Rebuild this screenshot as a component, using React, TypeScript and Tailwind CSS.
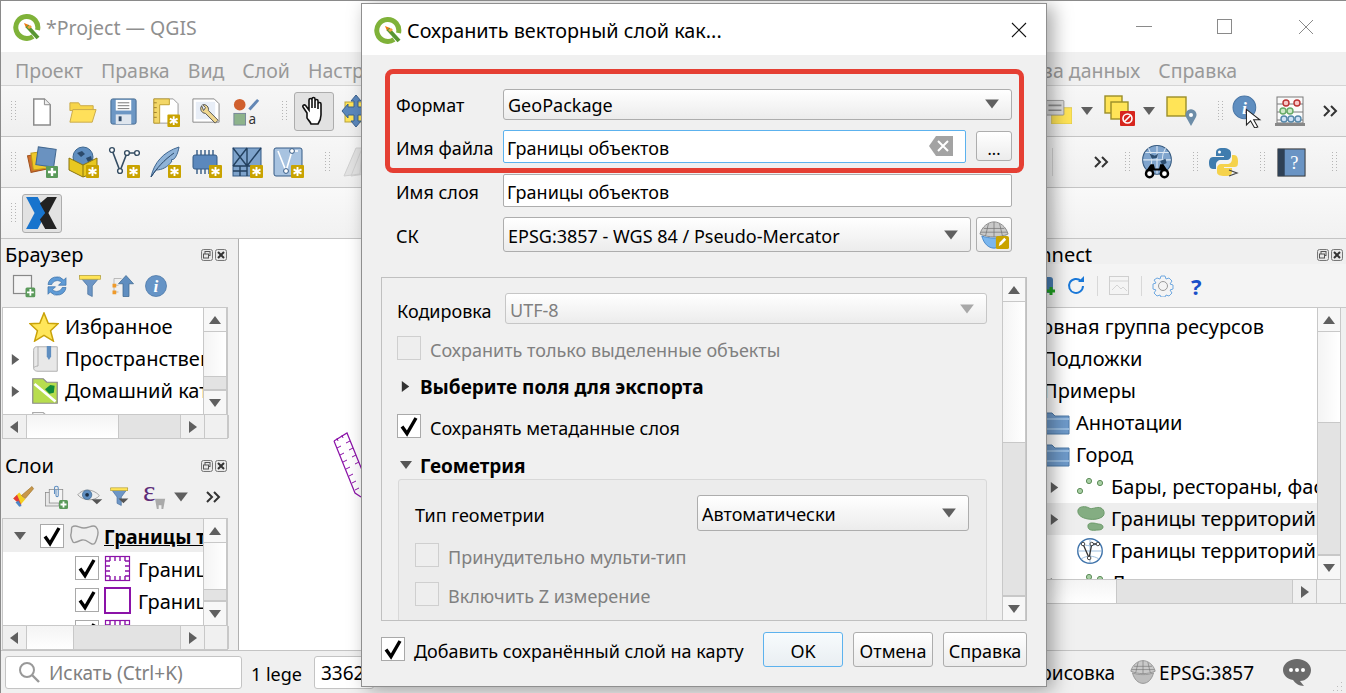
import type { ReactNode } from 'react';

const font = { fontFamily: '"Noto Sans", "Open Sans", sans-serif' };

function I({ s = 30, children }: { s?: number; children: ReactNode }) {
  return (
    <svg width={s} height={s} viewBox="0 0 32 32" className="shrink-0">
      {children}
    </svg>
  );
}

function Badge() {
  return (
    <g>
      <rect x="19" y="19" width="13" height="13" rx="1" fill="#c9a300" />
      <path d="M25.500 21v9M21.500 23.300l8 4.400M29.500 23.300l-8 4.400" stroke="#fff" strokeWidth="1.900" />
    </g>
  );
}

function QgisLogo({ s = 28 }: { s?: number }) {
  return (
    <svg width={s} height={s} viewBox="0 0 28 28" className="shrink-0">
      <path d="M20 23.500A11 11 0 1 1 24.500 17" fill="none" stroke="#7fb239" strokeWidth="5" />
      <path d="M11 10l5 2-3 3z" fill="#ee7913" />
      <path d="M14 13l11 12" stroke="#589632" strokeWidth="4" />
      <path d="M14 14l3-2 2 2-3 2z" fill="#f0a13a" />
    </svg>
  );
}

function Tri({ dir, c = '#5f5f5f', s = 14 }: { dir: 'u' | 'd' | 'l' | 'r'; c?: string; s?: number }) {
  const pts = { u: '1,11 13,11 7,3', d: '1,3 13,3 7,11', l: '10,1 10,13 2,7', r: '3,1 3,13 11,7' }[dir];
  return (
    <svg width={s} height={s} viewBox="0 0 14 14" className="shrink-0">
      <polygon points={pts} fill={c} />
    </svg>
  );
}

function Handle() {
  const dots = [];
  for (let i = 0; i < 7; i++) {
    dots.push(<rect key={`a${i}`} x="1" y={1 + i * 3} width="1" height="1" fill="#b5b5b5" />);
    dots.push(<rect key={`b${i}`} x="5" y={1 + i * 3} width="1" height="1" fill="#b5b5b5" />);
  }
  return (
    <svg width="7" height="22" className="shrink-0">
      {dots}
    </svg>
  );
}

function Chevrons() {
  return (
    <svg width="16" height="14" viewBox="0 0 16 14" className="shrink-0">
      <path d="M2 2l5 5-5 5M9 2l5 5-5 5" fill="none" stroke="#333" strokeWidth="2" />
    </svg>
  );
}

function Slot({ children }: { children: ReactNode }) {
  return <div className="flex w-[41px] shrink-0 items-center justify-center">{children}</div>;
}

function Cell({ children }: { children: ReactNode }) {
  return <div className="flex w-[33px] shrink-0 items-center justify-start">{children}</div>;
}

function Check() {
  return (
    <svg width="22" height="22" viewBox="0 0 22 22">
      <path d="M4 11.500l5 7L18 3" fill="none" stroke="#000" strokeWidth="3.400" />
    </svg>
  );
}

function CheckBox({ on, off }: { on?: boolean; off?: boolean }) {
  return (
    <div className={`flex h-6 w-6 shrink-0 items-center justify-center border ${off ? 'border-[#cfcfcf] bg-[#eeeeee]' : 'border-[#a9a9a9] bg-white'}`}>
      {on && <Check />}
    </div>
  );
}

function VScroll({ thumbTop, thumb }: { thumbTop: number; thumb: number }) {
  return (
    <div className="flex w-[24px] shrink-0 flex-col border-x border-[#c8c8c8] bg-[#f7f7f7]">
      <div className="flex h-[24px] shrink-0 items-center justify-center border-b border-[#c8c8c8]">
        <Tri dir="u" />
      </div>
      <div className="bg-gradient-to-r from-[#f4f4f4] to-white" style={{ height: thumbTop }} />
      <div className="border-y border-[#c8c8c8] bg-[#e3e3e3]" style={{ height: thumb }} />
      <div className="flex-1" />
      <div className="flex h-[24px] shrink-0 items-center justify-center border-t border-[#c8c8c8]">
        <Tri dir="d" />
      </div>
    </div>
  );
}

function HScroll({ before, thumb }: { before: number; thumb: number }) {
  return (
    <div className="flex h-[24px] shrink-0 border-t border-[#c8c8c8]">
      <div className="flex w-[24px] shrink-0 items-center justify-center border-r border-[#c8c8c8]">
        <Tri dir="l" />
      </div>
      <div className="shrink-0 bg-gradient-to-b from-[#f4f4f4] to-white" style={{ width: before }} />
      <div className="shrink-0 border-x border-[#c8c8c8] bg-[#e3e3e3]" style={{ width: thumb }} />
      <div className="flex w-[24px] shrink-0 items-center justify-center border-r border-[#c8c8c8]">
        <Tri dir="r" />
      </div>
      <div className="w-[24px] shrink-0 border-r border-[#c8c8c8]" />
    </div>
  );
}

function DockButtons() {
  return (
    <div className="flex shrink-0 gap-[2px]">
      <svg width="12" height="12" viewBox="0 0 12 12">
        <rect x="0.500" y="0.500" width="11" height="11" rx="2" fill="#e8e8e8" stroke="#777" />
        <rect x="4" y="2.500" width="5" height="4" fill="none" stroke="#555" />
        <rect x="2.500" y="5" width="5" height="4" fill="#e8e8e8" stroke="#555" />
      </svg>
      <svg width="12" height="12" viewBox="0 0 12 12">
        <rect x="0.500" y="0.500" width="11" height="11" rx="2" fill="#e8e8e8" stroke="#777" />
        <path d="M3 3l6 6M9 3l-6 6" stroke="#333" strokeWidth="2" />
      </svg>
    </div>
  );
}

function Combo({ text, w, h, dim }: { text: string; w: string; h: string; dim?: boolean }) {
  return (
    <div className={`flex ${w} ${h} shrink-0 items-center justify-between rounded-[3px] border bg-gradient-to-b from-white to-[#ececec] pl-[4px] pr-[11px] ${dim ? 'border-[#c6c6c6] text-[#808080]' : 'border-[#adadad] text-black'}`}>
      <span className="whitespace-nowrap pt-[2px]">{text}</span>
      <Tri dir="d" s={16} c={dim ? '#a8a8a8' : '#5f5f5f'} />
    </div>
  );
}

function Btn({ children, w, primary }: { children: ReactNode; w: string; primary?: boolean }) {
  return (
    <div className={`flex ${w} h-[35px] shrink-0 items-center justify-center rounded-[3px] border bg-gradient-to-b pt-[3px] ${primary ? 'border-[#5cb2ee] from-[#f7fbfd] to-[#e9eef2]' : 'border-[#adadad] from-white to-[#ececec]'}`}>
      {children}
    </div>
  );
}

function Page() {
  return (
    <I s={31}>
      <path d="M8 3h11l6 6v21H8z" fill="#fff" stroke="#8a8a8a" strokeWidth="1.500" />
      <path d="M19 3v6h6" fill="#eee" stroke="#8a8a8a" />
    </I>
  );
}

function Folder() {
  return (
    <I s={31}>
      <path d="M3 7h9l2 3h13v5H3z" fill="#f7d54a" stroke="#c9a94a" />
      <path d="M3 27l3-13h24l-4 13z" fill="#ffe05a" stroke="#c9a94a" />
    </I>
  );
}

function Save() {
  return (
    <I s={31}>
      <rect x="3" y="3" width="26" height="26" rx="2" fill="#6d97c4" stroke="#456a92" />
      <rect x="8" y="4" width="16" height="11" fill="#fff" />
      <path d="M10 7h12M10 10h12M10 13h12" stroke="#777" />
      <rect x="8" y="19" width="16" height="10" fill="#dfe6ee" />
      <rect x="11" y="21" width="3" height="5" fill="#2f4a68" />
    </I>
  );
}

function ProjectProps() {
  return (
    <I s={31}>
      <path d="M5 3h20l5 5v20H5z" fill="#fff" stroke="#999" />
      <path d="M5 3h16v6H11v19H5z" fill="#f3d768" stroke="#c0a030" />
      <path d="M5 7h3M5 12h3M5 17h3M5 22h3" stroke="#a0802a" />
      <Badge />
    </I>
  );
}

function WrenchPage() {
  return (
    <I s={31}>
      <path d="M3 3h22l5 5v19H3z" fill="#fff" stroke="#888" />
      <rect x="6" y="6" width="20" height="18" fill="#e8eef7" />
      <path d="M12 10a5 5 0 0 0 4 8l10 10 3-3-10-10a5 5 0 0 0-6-6l3 3-2 3z" fill="#f0d890" stroke="#555" />
    </I>
  );
}

function StyleMgr() {
  return (
    <I s={31}>
      <circle cx="9" cy="9" r="6" fill="#d0602e" />
      <path d="M19 14l9-10" stroke="#6387b5" strokeWidth="3" />
      <rect x="3" y="18" width="12" height="12" fill="#8db38b" stroke="#789" />
      <text x="18" y="29" fontSize="14" fill="#333" style={font}>a</text>
    </I>
  );
}

function Hand() {
  return (
    <I s={32}>
      <path d="M9 18L5 12c-1-2 2-3 3-1l3 4V5c0-2 3-2 3 0v8-9c0-2 3-2 3 0v9-7c0-2 3-2 3 0v8-5c0-2 3-2 3 0v11c0 4-1 6-3 9H13c-1-3-3-4-4-6z" fill="#fff" stroke="#111" strokeWidth="1.600" />
    </I>
  );
}

function MoveIcon() {
  return (
    <I s={32}>
      <rect x="5" y="7" width="22" height="20" fill="#ffe457" stroke="#b9a43c" />
      <path d="M16 0l5 6h-3v6h6V9l6 7-6 7v-3h-6v6h3l-5 6-5-6h3v-6H8v3l-6-7 6-7v3h6V6h-3z" fill="#5b88bd" stroke="#3d628e" />
    </I>
  );
}

function AddLayer() {
  return (
    <I s={32}>
      <rect x="3" y="8" width="17" height="17" transform="rotate(-12 11 16)" fill="#d0702e" stroke="#a0521e" />
      <rect x="6" y="6" width="17" height="17" transform="rotate(-8 14 14)" fill="#f0c828" stroke="#c09a18" />
      <rect x="11" y="2" width="18" height="18" transform="rotate(8 20 11)" fill="#6a92c0" stroke="#43688f" />
      <rect x="20" y="20" width="12" height="12" rx="1" fill="#5b9a5b" />
      <path d="M26 22v8M22 26h8" stroke="#fff" strokeWidth="2.400" />
    </I>
  );
}

function GlobeBox() {
  return (
    <I s={32}>
      <circle cx="16" cy="11" r="10" fill="#5f8ec0" stroke="#3e6890" />
      <path d="M10 7l5-2 3 3-4 3zM19 12l5-2 1 4-4 2z" fill="#2b4a6b" />
      <path d="M2 12l14 7 14-7v14l-14 5-14-7z" fill="#e8c820" stroke="#8a7510" />
      <path d="M16 19v12" stroke="#8a7510" />
      <Badge />
    </I>
  );
}

function VectorNew() {
  return (
    <I s={32}>
      <path d="M4 4l8 21L19 7h10" fill="none" stroke="#354d63" strokeWidth="1.600" />
      <circle cx="4" cy="4" r="2.400" fill="#fff" stroke="#354d63" strokeWidth="1.400" />
      <circle cx="12" cy="25" r="2.400" fill="#fff" stroke="#354d63" strokeWidth="1.400" />
      <circle cx="19" cy="7" r="2.400" fill="#fff" stroke="#354d63" strokeWidth="1.400" />
      <circle cx="29" cy="7" r="2.400" fill="#fff" stroke="#354d63" strokeWidth="1.400" />
      <Badge />
    </I>
  );
}

function Feather() {
  return (
    <I s={32}>
      <path d="M2 31C5 17 14 6 30 1c-1 6-3 10-5 12l-3 1 1 1c-4 6-10 9-16 9z" fill="#8fb3d8" stroke="#3f6690" />
      <path d="M2 31C8 22 15 14 25 7" stroke="#2b4a6b" fill="none" />
      <Badge />
    </I>
  );
}

function Chip() {
  return (
    <I s={32}>
      <rect x="3" y="9" width="24" height="14" rx="2" fill="#5b88bd" stroke="#345a85" />
      <path d="M7 4v5M11 4v5M15 4v5M19 4v5M23 4v5M7 23v5M11 23v5M15 23v5M19 23v5" stroke="#345a85" strokeWidth="1.400" />
      <Badge />
    </I>
  );
}

function Mesh() {
  return (
    <I s={32}>
      <rect x="2" y="2" width="28" height="28" fill="#7ea3cb" stroke="#345a85" />
      <path d="M2 20h28M16 2v28M2 2l14 18M16 2L2 20M30 2L16 20M2 25h14M9 20v10" stroke="#23405f" strokeWidth="1.400" fill="none" />
      <Badge />
    </I>
  );
}

function NodeBox() {
  return (
    <I s={32}>
      <rect x="2" y="2" width="28" height="28" rx="2" fill="#a8c3e0" stroke="#345a85" />
      <path d="M6 5l8 20 6-20h6" fill="none" stroke="#fff" strokeWidth="1.600" />
      <circle cx="14" cy="25" r="2.400" fill="#fff" stroke="#345a85" />
      <circle cx="20" cy="5" r="2.400" fill="#fff" stroke="#345a85" />
      <Badge />
    </I>
  );
}

function GhostStack() {
  return (
    <I s={32}>
      <path d="M3 30L15 2l6 0-2 26zM10 30L22 0l6 2-4 26z" fill="#e2e2e2" stroke="#d0d0d0" />
    </I>
  );
}

function XLogo() {
  return (
    <I s={34}>
      <path d="M1 1h11l8 15-8 15H1l8-15z" fill="#1874cd" />
      <path d="M21 1h9l-8 15 8 15H19l-5-9 5-6-5-9z" fill="#222" />
    </I>
  );
}

function SelectYellow() {
  return (
    <I s={26}>
      <rect x="7" y="12" width="25" height="20" fill="#ffe457" stroke="#d6c14a" />
      <rect x="0" y="3" width="22" height="18" rx="1" fill="#d8d8d8" stroke="#8d8d8d" />
      <path d="M3 9h16M3 15h16" stroke="#8d8d8d" strokeWidth="2" />
    </I>
  );
}

function Deselect() {
  return (
    <I s={32}>
      <rect x="1" y="1" width="17" height="17" fill="#ffe457" stroke="#9b8e28" strokeWidth="1.400" />
      <rect x="7" y="7" width="17" height="17" fill="#ffe457" stroke="#9b8e28" strokeWidth="1.400" />
      <rect x="16" y="16" width="15" height="15" rx="1" fill="#d7261e" />
      <circle cx="23.500" cy="23.500" r="4.500" fill="none" stroke="#fff" strokeWidth="1.600" />
      <path d="M20 27l7-7" stroke="#fff" strokeWidth="1.600" />
    </I>
  );
}

function SelectPin() {
  return (
    <I s={32}>
      <rect x="1" y="2" width="19" height="19" fill="#ffe457" stroke="#9b8e28" strokeWidth="1.400" />
      <path d="M25 31l-5-9a5.500 5.500 0 1 1 10 0z" fill="#6d8da8" />
      <circle cx="25" cy="20" r="2" fill="#fff" />
    </I>
  );
}

function InfoCursor() {
  return (
    <I s={33}>
      <circle cx="12" cy="12" r="11" fill="#5f8ec0" stroke="#4a76a6" />
      <text x="12" y="18" fontSize="17" fontWeight="700" fontStyle="italic" fill="#fff" textAnchor="middle" style={{ fontFamily: '"Liberation Serif", serif' }}>i</text>
      <path d="M14 14v15l4-4 4 7 3-1-4-7h6z" fill="#fff" stroke="#222" />
    </I>
  );
}

function Abacus() {
  return (
    <I s={32}>
      <rect x="3" y="2" width="26" height="26" fill="#fafafa" stroke="#7a7a7a" />
      <path d="M3 9h26M3 17h26M3 25h26" stroke="#7a7a7a" />
      <circle cx="12" cy="8" r="3" fill="#f7c8c8" stroke="#b33" strokeWidth="1.400" />
      <circle cx="23" cy="8" r="3" fill="#f7c8c8" stroke="#b33" strokeWidth="1.400" />
      <circle cx="9" cy="16" r="3" fill="#cfe8c8" stroke="#6a6" strokeWidth="1.400" />
      <circle cx="16" cy="16" r="3" fill="#cfe8c8" stroke="#6a6" strokeWidth="1.400" />
      <circle cx="10" cy="24" r="3" fill="#cfe0f5" stroke="#58a" strokeWidth="1.400" />
      <circle cx="17" cy="24" r="3" fill="#cfe0f5" stroke="#58a" strokeWidth="1.400" />
      <circle cx="24" cy="24" r="3" fill="#cfe0f5" stroke="#58a" strokeWidth="1.400" />
      <rect x="1" y="28" width="30" height="3" fill="#888" />
    </I>
  );
}

function MetaSearch() {
  return (
    <I s={34}>
      <circle cx="16" cy="14" r="13.500" fill="#7fa4cd" stroke="#35597f" />
      <path d="M5 7h22M3 14h26M16 1v26M8 3c4 7 4 15 0 21M24 3c-4 7-4 15 0 21" stroke="#dbe7f3" fill="none" />
      <path d="M9 8l5 2 3-2-1 4-5 1zM19 15l5-2 1 4-4 2z" fill="#2e4f72" />
      <circle cx="9" cy="27" r="4.500" fill="#000" />
      <circle cx="23" cy="27" r="4.500" fill="#000" />
      <circle cx="9" cy="27" r="2.200" fill="#fff" />
      <circle cx="23" cy="27" r="2.200" fill="#fff" />
      <path d="M6 24l4-6h3l1 4h4l1-4h3l4 6z" fill="#000" />
    </I>
  );
}

function PythonIcon() {
  return (
    <I s={32}>
      <path d="M15 2c-6 0-7 2-7 5v3h8v1H5c-3 0-4 3-4 6s1 6 4 6h3v-4c0-3 2-5 5-5h6c2 0 4-2 4-4V7c0-3-3-5-8-5z" fill="#3f7cae" />
      <circle cx="11.500" cy="6" r="1.500" fill="#fff" />
      <path d="M17 30c6 0 7-2 7-5v-3h-8v-1h11c3 0 3-3 3-6s-1-6-4-6h-2v4c0 3-2 5-5 5h-6c-2 0-4 2-4 4v4c0 3 3 4 8 4z" fill="#f5d24b" />
      <path d="M21 24l8 3-8 3" fill="none" stroke="#444" strokeWidth="1.200" />
    </I>
  );
}

function HelpBook() {
  return (
    <I s={31}>
      <rect x="2" y="2" width="28" height="28" fill="#6a94c4" stroke="#333" />
      <rect x="2" y="2" width="7" height="28" fill="#2f4156" />
      <text x="19" y="23" fontSize="19" fill="#fff" textAnchor="middle" style={{ fontFamily: '"Liberation Serif", serif' }}>?</text>
    </I>
  );
}

function NewGpkg() {
  return (
    <I s={24}>
      <rect x="2" y="2" width="24" height="24" fill="#f4f4f4" stroke="#888" strokeWidth="1.600" />
      <rect x="18" y="18" width="13" height="13" rx="2" fill="#5b9a5b" />
      <path d="M24.500 20v9M20 24.500h9" stroke="#fff" strokeWidth="2.400" />
    </I>
  );
}

function Refresh() {
  return (
    <I s={24}>
      <path d="M4 14a12 12 0 0 1 21-6l3-3v10H18l4-4a8 8 0 0 0-13 3z" fill="#5f9bd6" stroke="#3f73aa" />
      <path d="M28 18a12 12 0 0 1-21 6l-3 3V17h10l-4 4a8 8 0 0 0 13-3z" fill="#5f9bd6" stroke="#3f73aa" />
    </I>
  );
}

function Funnel({ s = 24 }: { s?: number }) {
  return (
    <I s={s}>
      <path d="M2 3h28l-11 13v14l-6-3V16z" fill="#6d96c6" stroke="#4a719e" />
      <rect x="2" y="2" width="28" height="5" fill="#ffe457" stroke="#b9a43c" />
    </I>
  );
}

function CollapseTree() {
  return (
    <I s={24}>
      <path d="M4 6h10M4 6v20M4 15h6M4 24h6" stroke="#aaa" fill="none" />
      <rect x="2" y="13" width="5" height="5" fill="#ef9a2a" />
      <rect x="2" y="22" width="5" height="5" fill="#ef9a2a" />
      <path d="M20 2l10 11h-6v17h-8V13h-6z" fill="#5f8ec0" stroke="#3e6890" />
    </I>
  );
}

function InfoBall() {
  return (
    <I s={24}>
      <circle cx="16" cy="16" r="14" fill="#6694c6" stroke="#4a76a6" />
      <text x="16" y="24" fontSize="23" fontWeight="700" fontStyle="italic" fill="#fff" textAnchor="middle" style={{ fontFamily: '"Liberation Serif", serif' }}>i</text>
    </I>
  );
}

function Star() {
  return (
    <I s={30}>
      <polygon points="16,1 20.500,12 31,12.500 23,20 26,31 16,25 6,31 9,20 1,12.500 11.500,12" fill="#ffe65a" stroke="#c9a20a" strokeWidth="1.600" />
    </I>
  );
}

function Scroll() {
  return (
    <I s={28}>
      <path d="M6 2h24v28H8c-4 0-5-2-5-4V6c0-2 1-4 3-4z" fill="#e8e8e8" stroke="#a8a8a8" />
      <path d="M8 2v22c-2 0-4 1-5 2" fill="none" stroke="#a8a8a8" />
      <path d="M18 1h5v12l-2.500 4-2.500-4z" fill="#5f8ec0" />
    </I>
  );
}

function HomeMap() {
  return (
    <I s={28}>
      <path d="M2 2h12l4 4h12v24H2z" fill="#b7dd4e" stroke="#8a8a8a" strokeWidth="1.400" />
      <path d="M4 8l24 20" stroke="#fff" strokeWidth="3" />
      <path d="M16 14l6-5 5 1-1 8-5 1z" fill="#108a3a" />
    </I>
  );
}

function PlainFolder() {
  return (
    <I s={28}>
      <path d="M2 4h12l4 4h12v22H2z" fill="#f4f4f4" stroke="#aaa" strokeWidth="1.400" />
    </I>
  );
}

function Brush() {
  return (
    <I s={24}>
      <path d="M3 18l8-8 8 9-6 7z" fill="#f4d020" />
      <path d="M3 18l5-5 6 14-1 0z" fill="#e23a3a" />
      <path d="M6 23l4-2 4 7-3 1z" fill="#4b86c6" />
      <path d="M14 14L28 2l2 3-11 13z" fill="#c8974a" stroke="#a67a30" />
    </I>
  );
}

function AddGroup() {
  return (
    <I s={24}>
      <rect x="2" y="10" width="18" height="18" fill="#e8e8e8" stroke="#888" />
      <rect x="7" y="6" width="18" height="18" fill="#f4f4f4" stroke="#888" />
      <path d="M14 12V4c0-3 5-3 5 0v10c0 2-3 2-3 0V6" fill="none" stroke="#5f8ec0" strokeWidth="1.400" />
      <rect x="20" y="20" width="12" height="12" rx="2" fill="#5b9a5b" />
      <path d="M26 22v8M22 26h8" stroke="#fff" strokeWidth="2.400" />
    </I>
  );
}

function Eye() {
  return (
    <svg width="26" height="24" viewBox="0 0 36 28" className="shrink-0">
      <path d="M1 11C8 2 22 2 31 12c-6 8-22 8-30-1z" fill="#eee" stroke="#888" />
      <circle cx="14" cy="11" r="6.500" fill="#5f8ec0" stroke="#3e6890" />
      <circle cx="14" cy="11" r="2.600" fill="#1c2f45" />
      <polygon points="20,17 35,17 27.500,24" fill="#555" />
    </svg>
  );
}

function FilterDrop() {
  return (
    <svg width="24" height="24" viewBox="0 0 34 28" className="shrink-0">
      <path d="M1 2h24l-9 12v12l-6-3V14z" fill="#6d96c6" stroke="#4a719e" />
      <rect x="1" y="1" width="24" height="4" fill="#ffe457" stroke="#b9a43c" />
      <polygon points="12,16 26,16 19,23" fill="#555" />
    </svg>
  );
}

function ExprIcon() {
  return (
    <svg width="24" height="26" viewBox="0 0 26 28" className="shrink-0">
      <text x="0" y="18" fontSize="32" fill="#5e2d78" style={{ fontFamily: '"Liberation Serif", serif' }}>&#949;</text>
      <path d="M13 16h11l-2 11h-2v-4h-3v4h-2z" fill="#aaa" />
    </svg>
  );
}

function SymDash() {
  return (
    <svg width="27" height="27" viewBox="0 0 27 27" className="shrink-0">
      <rect x="1.500" y="1.500" width="24" height="24" fill="#fff" stroke="#8b12a8" strokeWidth="1.200" />
      <path d="M6 2v4M11 2v4M16 2v4M21 2v4M6 21v4M11 21v4M16 21v4M21 21v4M2 6h4M2 11h4M2 16h4M2 21h4M21 6h4M21 11h4M21 16h4M21 21h4" stroke="#8b12a8" strokeWidth="1.400" />
    </svg>
  );
}

function Blob() {
  return (
    <svg width="30" height="24" viewBox="0 0 30 24" className="shrink-0">
      <path d="M3 3c4-3 7 1 12 1s9-4 12-1 2 8 1 11-2 7-5 6-6-5-10-4-8 4-9 2-3-5-2-8 0-6 1-7z" fill="#eeeeee" stroke="#9a9a9a" strokeWidth="1.400" />
    </svg>
  );
}

function GreenBlobs() {
  return (
    <svg width="30" height="28" viewBox="0 0 30 28" className="shrink-0">
      <path d="M2 5c1-4 8-4 11-2s8-2 12 0 4 7 1 9-8 3-14 2S1 10 2 5z" fill="#84ad82" stroke="#6c9a6a" />
      <path d="M12 20c1-3 7-2 10-1 3 0 5 1 5 3s-2 3-5 3-11 2-10-5z" fill="#84ad82" stroke="#6c9a6a" />
    </svg>
  );
}

function Dots() {
  return (
    <svg width="28" height="28" viewBox="0 0 28 28" className="shrink-0">
      <circle cx="4" cy="18" r="2.600" fill="#a8d0a4" stroke="#5e8c5a" />
      <circle cx="13" cy="8" r="2.600" fill="#a8d0a4" stroke="#5e8c5a" />
      <circle cx="24" cy="10" r="2.600" fill="#a8d0a4" stroke="#5e8c5a" />
    </svg>
  );
}

function BlueFolder() {
  return (
    <svg width="30" height="24" viewBox="0 0 30 24" className="shrink-0">
      <path d="M1 2h11l3 3h14v18H1z" fill="#6f9bcb" stroke="#4f7aa8" />
      <path d="M1 8h28M1 18h28" stroke="#96bbe0" strokeWidth="2" />
    </svg>
  );
}

function GlobeV() {
  return (
    <I s={28}>
      <circle cx="16" cy="16" r="14" fill="#fff" stroke="#3f73aa" strokeWidth="1.600" />
      <path d="M2 16h28M16 2v28M6 7c6 4 14 4 20 0M6 25c6-4 14-4 20 0" stroke="#8fb3d8" fill="none" />
      <path d="M8 8l7 16 3-16 7 0" fill="none" stroke="#333" strokeWidth="1.500" />
      <circle cx="8" cy="8" r="2" fill="#fff" stroke="#333" />
      <circle cx="15" cy="24" r="2" fill="#fff" stroke="#333" />
      <circle cx="18" cy="8" r="2" fill="#fff" stroke="#333" />
      <circle cx="25" cy="8" r="2" fill="#fff" stroke="#333" />
    </I>
  );
}

function CrsGlobe({ s = 32, badge }: { s?: number; badge?: boolean }) {
  return (
    <I s={s}>
      <path d="M1 15C3 7 10 2 16 2s13 5 15 13c-9 4-21 4-30 0z" fill="#c9c9c9" stroke="#8a8a8a" />
      <path d="M10 4l-3 13M22 4l3 13M16 2v16M5 9h22M2 13h28" stroke="#777" fill="none" strokeWidth="0.800" />
      <path d="M3 17c2 8 7 13 13 13s11-5 13-13c-8 3-18 3-26 0z" fill={badge ? '#7ab6ee' : '#bdbdbd'} stroke={badge ? '#4a86c6' : '#8a8a8a'} />
      {badge && (
        <g>
          <rect x="18" y="17" width="14" height="14" rx="2" fill="#c9a300" />
          <path d="M21 28l1-4 5-5 2 2-5 5z" fill="#fff" />
        </g>
      )}
    </I>
  );
}

function Gear() {
  return (
    <svg width="22" height="22" viewBox="0 0 22 22" className="ml-[10px] shrink-0">
      <path d="M9 1h4l1 3 3-1 3 3-2 3 3 1v4l-3 1 2 3-3 3-3-1-1 2H9l-1-2-3 1-3-3 2-3-3-1V9l3-1-2-3 3-2 3 1z" fill="none" stroke="#6fa8e0" />
      <circle cx="11" cy="11" r="4.500" fill="none" stroke="#9a9a9a" />
    </svg>
  );
}

function TreeRow({ pl, icon, text, hl, arrow, arrowX = 'w-[28px]', ml = 'ml-[7px]' }: { pl: string; icon?: ReactNode; text: string; hl?: boolean; arrow?: boolean; arrowX?: string; ml?: string }) {
  return (
    <div className={`flex h-[32px] shrink-0 items-center whitespace-nowrap ${pl} ${hl ? 'bg-[#eeeeee]' : ''}`}>
      <div className={`flex ${arrowX} shrink-0 items-center`}>{arrow && <Tri dir="r" s={13} />}</div>
      {icon}
      <span className={ml}>{text}</span>
    </div>
  );
}

function BrowserPanel() {
  return (
    <div className="flex h-[200px] shrink-0 flex-col">
      <div className="flex h-[25px] shrink-0 items-center justify-between pl-[4px] pr-[2px] pt-[6px]">
        <span>Браузер</span>
        <DockButtons />
      </div>
      <div className="flex h-[43px] shrink-0 items-center pl-[11px]">
        <Cell><NewGpkg /></Cell>
        <Cell><Refresh /></Cell>
        <Cell><Funnel /></Cell>
        <Cell><CollapseTree /></Cell>
        <Cell><InfoBall /></Cell>
      </div>
      <div className="mx-[1px] flex min-h-0 flex-1 flex-col border border-[#c8c8c8]">
        <div className="flex min-h-0 flex-1">
          <div className="min-w-0 flex-1 overflow-hidden bg-white pt-[3px]">
            <TreeRow pl="pl-[26px]" arrowX="w-0" ml="ml-[6px]" icon={<Star />} text="Избранное" />
            <TreeRow pl="pl-[6px]" arrowX="w-[22px]" ml="ml-[6px]" arrow icon={<Scroll />} text="Пространственные закладки" />
            <TreeRow pl="pl-[6px]" arrowX="w-[22px]" ml="ml-[6px]" arrow icon={<HomeMap />} text="Домашний каталог" />
            <TreeRow pl="pl-[6px]" arrowX="w-[22px]" ml="ml-[6px]" icon={<PlainFolder />} text="Диск C:" />
          </div>
          <VScroll thumbTop={46} thumb={14} />
        </div>
        <HScroll before={91} thumb={63} />
      </div>
    </div>
  );
}

function LayersPanel() {
  return (
    <div className="flex min-h-0 flex-1 flex-col">
      <div className="flex h-[21px] shrink-0 items-center justify-between pl-[4px] pr-[2px]">
        <span>Слои</span>
        <DockButtons />
      </div>
      <div className="flex h-[42px] shrink-0 items-center pl-[10px]">
        <Cell><Brush /></Cell>
        <Cell><AddGroup /></Cell>
        <Cell><Eye /></Cell>
        <Cell><FilterDrop /></Cell>
        <div className="w-[30px] shrink-0"><ExprIcon /></div>
        <Tri dir="d" s={16} />
        <div className="ml-[16px]"><Chevrons /></div>
      </div>
      <div className="mx-[1px] flex min-h-0 flex-1 flex-col border border-[#c8c8c8]">
        <div className="flex min-h-0 flex-1">
          <div className="min-w-0 flex-1 overflow-hidden bg-white">
            <div className="flex h-[33px] items-center whitespace-nowrap bg-[#eeeeee] pl-[10px]">
              <Tri dir="d" s={14} />
              <div className="ml-[13px]"><CheckBox on /></div>
              <div className="ml-[5px]"><Blob /></div>
              <span className="ml-[5px] pt-[3px] text-[19px] font-bold underline">Границы территорий</span>
            </div>
            {[true, false, true].map((dash, i) => (
              <div key={i} className="flex h-[32px] items-center whitespace-nowrap pl-[72px]">
                <CheckBox on />
                <div className="ml-[5px]">
                  {dash ? <SymDash /> : <div className="h-[27px] w-[27px] border-[2px] border-[#8b12a8] bg-white" />}
                </div>
                <span className="ml-[7px] pt-[3px]">Границы</span>
              </div>
            ))}
          </div>
          <VScroll thumbTop={47} thumb={12} />
        </div>
        <HScroll before={46} thumb={108} />
      </div>
    </div>
  );
}

function ConnectPanel() {
  return (
    <div className="flex w-[346px] shrink-0 flex-col">
      <div className="flex h-[25px] shrink-0 items-center justify-between pl-[0px] pr-[3px] pt-[6px]">
        <span className="flex w-[92px] justify-end whitespace-nowrap">NextGIS Connect</span>
        <DockButtons />
      </div>
      <div className="flex h-[43px] shrink-0 items-center bg-[#f4f4f4] pl-[38px]">
        <svg width="18" height="22" viewBox="0 0 18 22" className="shrink-0">
          <rect x="1" y="2" width="14" height="16" rx="3" fill="#4a7fb5" />
          <path d="M13 12v8M9 16h8" stroke="#22a522" strokeWidth="3" />
        </svg>
        <svg width="22" height="22" viewBox="0 0 22 22" className="ml-[9px] shrink-0">
          <path d="M18 11a7 7 0 1 1-2-5" fill="none" stroke="#1a78d8" strokeWidth="2" />
          <path d="M13 7h6V1z" fill="#1a78d8" />
        </svg>
        <div className="ml-[10px] h-[20px] w-px bg-[#d8d8d8]" />
        <svg width="22" height="22" viewBox="0 0 22 22" className="ml-[10px] shrink-0">
          <rect x="1.500" y="1.500" width="19" height="18" fill="#f4f4f4" stroke="#cfcfcf" />
          <path d="M2 6h18M4 15l5-5 4 4 2-2 4 4" fill="none" stroke="#d4d4d4" />
        </svg>
        <div className="ml-[11px] h-[20px] w-px bg-[#d8d8d8]" />
        <Gear />
        <span className="ml-[17px] text-[22px] leading-none font-bold text-[#1a4fc8]">?</span>
      </div>
      <div className="flex h-[297px] shrink-0 flex-col border-y border-[#c8c8c8] pr-[5px]">
        <div className="flex min-h-0 flex-1">
          <div className="min-w-0 flex-1 overflow-hidden bg-white pt-[3px]">
            <div className="flex h-[32px] items-center whitespace-nowrap pl-[4px]">Основная группа ресурсов</div>
            <div className="flex h-[32px] items-center whitespace-nowrap pl-[42px]">Подложки</div>
            <div className="flex h-[32px] items-center whitespace-nowrap pl-[43px]">Примеры</div>
            <TreeRow pl="pl-[40px]" arrowX="w-0" ml="ml-[6px]" icon={<BlueFolder />} text="Аннотации" />
            <TreeRow pl="pl-[40px]" arrowX="w-0" ml="ml-[6px]" icon={<BlueFolder />} text="Город" />
            <TreeRow pl="pl-[48px]" arrowX="w-[28px]" arrow icon={<Dots />} text="Бары, рестораны, фастфуд" />
            <TreeRow pl="pl-[48px]" arrowX="w-[28px]" ml="ml-[5px]" arrow hl icon={<GreenBlobs />} text="Границы территорий" />
            <TreeRow pl="pl-[48px]" arrowX="w-[28px]" icon={<GlobeV />} text="Границы территорий" />
            <TreeRow pl="pl-[48px]" arrowX="w-[28px]" arrow icon={<Dots />} text="Дороги" />
          </div>
          <VScroll thumbTop={90} thumb={134} />
        </div>
        <div className="flex h-[24px] shrink-0 border-t border-[#c8c8c8]">
          <div className="w-[116px] shrink-0 bg-gradient-to-b from-[#f4f4f4] to-white" />
          <div className="flex-1 border-x border-[#c8c8c8] bg-[#e3e3e3]" />
          <div className="flex w-[24px] shrink-0 items-center justify-center border-r border-[#c8c8c8]">
            <Tri dir="r" />
          </div>
          <div className="w-[24px] shrink-0 border-r border-[#c8c8c8]" />
        </div>
      </div>
    </div>
  );
}

function Dialog() {
  return (
    <div className="absolute left-[360px] top-[2px] flex h-[684px] w-[686px] flex-col border border-[#8f8f8f] bg-[#f0f0f0] text-[18px] shadow-[6px_3px_18px_rgba(0,0,0,0.35)]">
      <div className="flex h-[51px] shrink-0 items-center justify-between bg-white pl-[12px] pr-[19px]">
        <div className="flex items-center gap-[5px]">
          <QgisLogo />
          <span className="pt-[2px] text-[19.800px]">Сохранить векторный слой как...</span>
        </div>
        <svg width="16" height="16" viewBox="0 0 16 16">
          <path d="M1 1l14 14M15 1L1 15" stroke="#111" strokeWidth="1.100" />
        </svg>
      </div>

      <div className="flex flex-1 flex-col pl-[19px] pr-[19px]">
        <div className="px-[15px] pt-[34px]">
          <div className="flex h-[30px] items-center">
            <span className="w-[107px] shrink-0 pt-[2px]">Формат</span>
            <Combo text="GeoPackage" w="flex-1" h="h-[31px]" />
          </div>
          <div className="mt-[10px] flex h-[34px] items-center">
            <span className="w-[107px] shrink-0 pt-[4px]">Имя файла</span>
            <div className="flex h-[33px] flex-1 items-center justify-between rounded-[2px] border border-[#5cb2ee] bg-white pl-[3px] pr-[12px]">
              <span className="pt-[4px]">Границы объектов</span>
              <svg width="24" height="20" viewBox="0 0 24 20" className="shrink-0">
                <path d="M7 0h17v20H7L0 10z" fill="#a3a3a3" />
                <path d="M9 5l10 10M19 5L9 15" stroke="#fff" strokeWidth="2" />
              </svg>
            </div>
            <div className="ml-[10px] flex h-[30px] w-[36px] shrink-0 items-center justify-center rounded-[3px] border border-[#adadad] bg-gradient-to-b from-white to-[#ececec] pt-[6px] text-[16px]">...</div>
          </div>
          <div className="mt-[10px] flex h-[34px] items-center">
            <span className="w-[107px] shrink-0 pt-[4px]">Имя слоя</span>
            <div className="flex h-[33px] flex-1 items-center rounded-[2px] border border-[#adadad] bg-white pl-[3px] pt-[4px]">Границы объектов</div>
          </div>
          <div className="mt-[10px] flex h-[35px] items-center">
            <span className="w-[107px] shrink-0 pt-[2px]">СК</span>
            <Combo text="EPSG:3857 - WGS 84 / Pseudo-Mercator" w="w-[468px]" h="h-[35px]" />
            <div className="ml-[5px] flex h-[35px] flex-1 items-center justify-center rounded-[3px] border border-[#adadad] bg-gradient-to-b from-white to-[#ececec]">
              <CrsGlobe badge s={30} />
            </div>
          </div>
        </div>

        <div className="mt-[25px] flex h-[344px] shrink-0 border border-[#c0c0c0]">
          <div className="min-w-0 flex-1 overflow-hidden pl-[15px] pr-[15px]">
            <div className="mt-[15px] flex h-[31px] items-center">
              <span className="w-[108px] shrink-0 pt-[4px]">Кодировка</span>
              <Combo text="UTF-8" w="flex-1" h="h-[31px]" dim />
            </div>
            <div className="mt-[12px] flex h-[24px] items-center gap-[9px]">
              <CheckBox off />
              <span className="pt-[4px] text-[#808080]">Сохранить только выделенные объекты</span>
            </div>
            <div className="mt-[14px] flex h-[24px] items-center">
              <div className="ml-[2px] w-[21px]"><Tri dir="r" s={13} c="#333" /></div>
              <span className="pt-[2px] text-[19px] font-bold">Выберите поля для экспорта</span>
            </div>
            <div className="mt-[16px] flex h-[24px] items-center gap-[9px]">
              <CheckBox on />
              <span className="pt-[4px]">Сохранять метаданные слоя</span>
            </div>
            <div className="mt-[15px] flex h-[24px] items-center">
              <div className="ml-[2px] w-[21px]"><Tri dir="d" s={14} c="#555" /></div>
              <span className="pt-[2px] text-[19px] font-bold">Геометрия</span>
            </div>
            <div className="ml-[1px] mt-[2px] h-[200px] rounded-t-[3px] border border-[#d8d8d8] bg-[#ececec] pl-[16px] pr-[17px]">
              <div className="mt-[15px] flex h-[36px] items-center">
                <span className="w-[282px] shrink-0 pt-[4px]">Тип геометрии</span>
                <Combo text="Автоматически" w="flex-1" h="h-[36px]" />
              </div>
              <div className="mt-[12px] flex h-[24px] items-center gap-[9px]">
                <CheckBox off />
                <span className="pt-[4px] text-[#808080]">Принудительно мульти-тип</span>
              </div>
              <div className="mt-[15px] flex h-[24px] items-center gap-[9px]">
                <CheckBox off />
                <span className="pt-[4px] text-[#808080]">Включить Z измерение</span>
              </div>
            </div>
          </div>
          <VScroll thumbTop={141} thumb={155} />
        </div>

        <div className="flex items-start pt-[11px]">
          <div className="mt-[5px]"><CheckBox on /></div>
          <span className="ml-[9px] mt-[10px] flex-1">Добавить сохранённый слой на карту</span>
          <div className="flex gap-[10px]">
            <Btn w="w-[80px]" primary>OK</Btn>
            <Btn w="w-[80px]">Отмена</Btn>
            <Btn w="w-[84px]">Справка</Btn>
          </div>
        </div>
      </div>

      <div className="absolute left-[23px] top-[65px] h-[104px] w-[639px] rounded-[8px] border-[5px] border-[#e53f33]" />
    </div>
  );
}

export default function App() {
  return (
    <div className="relative flex h-[693px] w-[1346px] flex-col overflow-hidden border-l border-t border-[#8a8a8a] bg-[#f0f0f0] text-[20px] leading-none text-black" style={font}>
      {/* title bar */}
      <div className="flex h-[51px] shrink-0 items-center justify-between bg-white pl-[12px]">
        <div className="flex items-center gap-[5px] text-[19.500px] text-[#8f8f8f]">
          <QgisLogo />
          <span className="pt-[3px]">*Project — QGIS</span>
        </div>
        <div className="flex items-center">
          <div className="flex w-[81px] justify-center"><div className="h-px w-[16px] bg-[#8a8a8a]" /></div>
          <div className="flex w-[81px] justify-center"><div className="h-[15px] w-[15px] border border-[#8a8a8a]" /></div>
          <div className="flex w-[81px] justify-center">
            <svg width="16" height="16" viewBox="0 0 16 16">
              <path d="M1 1l14 14M15 1L1 15" stroke="#8a8a8a" strokeWidth="1" />
            </svg>
          </div>
        </div>
      </div>

      {/* menu */}
      <div className="flex h-[34px] shrink-0 items-center justify-between border-b border-[#d4d4d4] pl-[14px] pr-[109px] pt-[4px] text-[19.500px] text-[#999999]">
        <div className="flex gap-[18px]">
          <span>Проект</span>
          <span>Правка</span>
          <span>Вид</span>
          <span>Слой</span>
          <span>Настройки</span>
        </div>
        <div className="flex gap-[18px]">
          <span>База данных</span>
          <span>Справка</span>
        </div>
      </div>

      {/* toolbars */}
      <div className="flex h-[51px] shrink-0 items-center justify-between border-b border-[#c4c4c4] bg-gradient-to-b from-[#f7f7f7] to-[#efefef] pl-[9px] pr-[8px]">
        <div className="flex items-center">
          <Handle />
          <div className="ml-[4px] flex">
            <Slot><Page /></Slot>
            <Slot><Folder /></Slot>
            <Slot><Save /></Slot>
            <Slot><ProjectProps /></Slot>
            <Slot><WrenchPage /></Slot>
            <Slot><StyleMgr /></Slot>
          </div>
          <div className="ml-[14px]"><Handle /></div>
          <div className="ml-[6px] flex h-[39px] w-[40px] items-center justify-center rounded-[3px] border border-[#adadad] bg-[#e2e2e2]"><Hand /></div>
          <div className="ml-[6px]"><MoveIcon /></div>
        </div>
        <div className="flex items-center">
          <SelectYellow />
          <div className="ml-[8px]"><Tri dir="d" s={14} /></div>
          <div className="ml-[10px]"><Deselect /></div>
          <div className="ml-[6px]"><Tri dir="d" s={14} /></div>
          <div className="ml-[10px]"><SelectPin /></div>
          <div className="ml-[19px]"><Handle /></div>
          <div className="ml-[8px]"><InfoCursor /></div>
          <div className="ml-[9px]"><Abacus /></div>
          <div className="ml-[16px]"><Chevrons /></div>
        </div>
      </div>

      <div className="flex h-[51px] shrink-0 items-center justify-between border-b border-[#c4c4c4] bg-gradient-to-b from-[#f7f7f7] to-[#efefef] pl-[9px] pr-[8px]">
        <div className="flex items-center">
          <Handle />
          <div className="ml-[4px] flex">
            <Slot><AddLayer /></Slot>
            <Slot><GlobeBox /></Slot>
            <Slot><VectorNew /></Slot>
            <Slot><Feather /></Slot>
            <Slot><Chip /></Slot>
            <Slot><Mesh /></Slot>
            <Slot><NodeBox /></Slot>
          </div>
          <div className="ml-[16px]"><Handle /></div>
          <div className="ml-[10px]"><GhostStack /></div>
        </div>
        <div className="flex items-center">
          <div className="h-[28px] w-px bg-[#d4d4d4]" />
          <div className="ml-[40px]"><Chevrons /></div>
          <div className="ml-[15px]"><Handle /></div>
          <div className="ml-[9px]"><MetaSearch /></div>
          <div className="ml-[18px]"><Handle /></div>
          <div className="ml-[9px]"><PythonIcon /></div>
          <div className="ml-[19px]"><Handle /></div>
          <div className="ml-[10px]"><HelpBook /></div>
          <div className="ml-[24px]"><Handle /></div>
        </div>
      </div>

      <div className="flex h-[51px] shrink-0 items-center border-b border-[#c4c4c4] bg-gradient-to-b from-[#f9f9f9] to-[#f1f1f1] pl-[9px]">
        <Handle />
        <div className="ml-[5px] flex h-[39px] w-[40px] items-center justify-center rounded-[3px] border border-[#adadad] bg-[#e2e2e2]"><XLogo /></div>
      </div>

      {/* dock area */}
      <div className="flex min-h-0 flex-1">
        <div className="flex w-[228px] shrink-0 flex-col">
          <BrowserPanel />
          <div className="flex h-[16px] shrink-0" />
          <LayersPanel />
        </div>
        <div className="w-[9px] shrink-0" />
        <div className="relative min-w-0 flex-1 border-l border-[#b0b0b0] bg-white">
          <svg width="60" height="90" viewBox="0 0 60 90" className="absolute left-[90px] top-[190px]">
            <path d="M5 12L18 4l15 37M5 12l21 52 6 4" fill="none" stroke="#8b12a8" strokeWidth="1.200" />
            <path d="M8 19l4-2M11 26l4-2M14 33l4-2M17 40l4-2M20 47l4-2M23 54l4-2M26 61l4-2M21 12l-4 2M24 19l-4 2M27 26l-4 2M30 33l-4 2M8 9l1 3M13 6l1 3" stroke="#8b12a8" strokeWidth="1" />
          </svg>
        </div>
        <ConnectPanel />
      </div>

      {/* status bar */}
      <div className="relative flex h-[43px] shrink-0 items-center justify-between border-t border-[#c4c4c4] pl-[4px] pr-[34px] text-[19px]">
        <div className="flex items-center">
          <div className="flex h-[33px] w-[237px] items-center rounded-[3px] border border-[#c4c4c4] bg-white pl-[12px] text-[#808080]">
            <svg width="22" height="22" viewBox="0 0 22 22" className="shrink-0">
              <circle cx="9" cy="9" r="7" fill="none" stroke="#999" strokeWidth="2" />
              <path d="M14 14l7 7" stroke="#999" strokeWidth="2.400" />
            </svg>
            <span className="ml-[9px] pt-[2px]">Искать (Ctrl+K)</span>
          </div>
          <span className="ml-[9px] pt-[3px] text-[18px]">1 lege</span>
          <div className="ml-[12px] flex h-[33px] w-[60px] items-center rounded-[3px] border border-[#c4c4c4] bg-white pl-[6px] pt-[2px]">3362</div>
        </div>
        <div className="flex items-center">
          <span className="whitespace-nowrap pt-[3px]">Отрисовка</span>
          <div className="ml-[15px]"><CrsGlobe s={26} /></div>
          <span className="ml-[3px] pt-[3px]">EPSG:3857</span>
          <svg width="30" height="30" viewBox="0 0 30 30" className="ml-[28px] shrink-0">
            <path d="M15 2c8 0 14 5 14 11s-5 11-11 11l4 5c-5 0-9-3-11-6C5 22 1 18 1 13 1 7 7 2 15 2z" fill="#6b6b6b" />
            <circle cx="9" cy="13" r="2" fill="#fff" />
            <circle cx="15" cy="13" r="2" fill="#fff" />
            <circle cx="21" cy="13" r="2" fill="#fff" />
          </svg>
        </div>
        <svg width="12" height="12" className="absolute bottom-[2px] right-[2px]">
          <path d="M9 3h1v1H9zM5 7h1v1H5zM9 7h1v1H9zM1 11h1v1H1zM5 11h1v1H5zM9 11h1v1H9z" fill="#bdbdbd" />
        </svg>
      </div>

      <Dialog />
    </div>
  );
}
